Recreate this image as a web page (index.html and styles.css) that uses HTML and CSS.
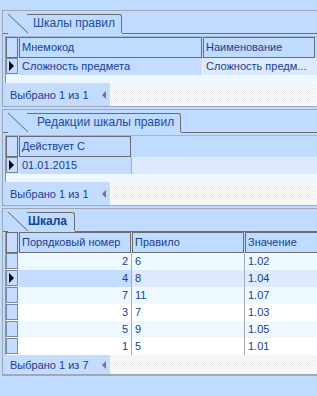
FILE: index.html
```html
<!DOCTYPE html>
<html>
<head>
    <meta charset="utf-8" />
    <title>Шкалы правил</title>
    <link rel="stylesheet" href="styles.css">
</head>
<body>
    <div class="page">
        <div class="group g1">
            <div class="tabs"><div class="tab t1">Шкалы правил</div></div>
            <div class="pane">
                <div class="grid">
                    <div class="row head">
                        <div class="ind"></div>
                        <div class="hc w183">Мнемокод</div>
                        <div class="hc w112">Наименование</div>
                    </div>
                    <div class="row sel">
                        <div class="ind cur"></div>
                        <div class="dc w183 focus lite">Сложность предмета</div>
                        <div class="dc w112">Сложность предм...</div>
                    </div>
                    <div class="empty"></div>
                </div>
                <div class="status">
                    <div class="info">Выбрано 1 из 1<span class="prev"></span></div>
                    <div class="dots"></div>
                </div>
            </div>
        </div>

        <div class="group g2">
            <div class="tabs"><div class="tab t2">Редакции шкалы правил</div></div>
            <div class="pane">
                <div class="grid">
                    <div class="row head">
                        <div class="ind"></div>
                        <div class="hc w112">Действует С</div>
                    </div>
                    <div class="row sel">
                        <div class="ind cur"></div>
                        <div class="dc w112 focus">01.01.2015</div>
                    </div>
                    <div class="empty"></div>
                </div>
                <div class="status">
                    <div class="info">Выбрано 1 из 1<span class="prev"></span></div>
                    <div class="dots"></div>
                </div>
            </div>
        </div>

        <div class="group g3">
            <div class="tabs"><div class="tab t3">Шкала</div></div>
            <div class="pane">
                <div class="grid">
                    <div class="row head">
                        <div class="ind"></div>
                        <div class="hc w112">Порядковый номер</div>
                        <div class="hc w112">Правило</div>
                        <div class="hc rest">Значение</div>
                    </div>
                    <div class="row odd">
                        <div class="ind"></div>
                        <div class="dc w112 num">2</div>
                        <div class="dc w112">6</div>
                        <div class="dc rest">1.02</div>
                    </div>
                    <div class="row sel">
                        <div class="ind cur"></div>
                        <div class="dc w112 num focus">4</div>
                        <div class="dc w112">8</div>
                        <div class="dc rest">1.04</div>
                    </div>
                    <div class="row odd">
                        <div class="ind"></div>
                        <div class="dc w112 num">7</div>
                        <div class="dc w112">11</div>
                        <div class="dc rest">1.07</div>
                    </div>
                    <div class="row">
                        <div class="ind"></div>
                        <div class="dc w112 num">3</div>
                        <div class="dc w112">7</div>
                        <div class="dc rest">1.03</div>
                    </div>
                    <div class="row odd">
                        <div class="ind"></div>
                        <div class="dc w112 num">5</div>
                        <div class="dc w112">9</div>
                        <div class="dc rest">1.05</div>
                    </div>
                    <div class="row">
                        <div class="ind"></div>
                        <div class="dc w112 num">1</div>
                        <div class="dc w112">5</div>
                        <div class="dc rest">1.01</div>
                    </div>
                </div>
                <div class="status short">
                    <div class="info">Выбрано 1 из 7<span class="prev"></span></div>
                    <div class="dots"></div>
                </div>
            </div>
        </div>
    </div>
</body>
</html>
```

FILE: styles.css
```css
body{
    margin: 0;
    width: 317px;
    height: 396px;
    overflow: hidden;
    background: #bfdbff;
    font-family: "Liberation Sans", Arial, sans-serif;
    font-size: 11px;
    color: #1b3d8f;
}
.page{
    display: flex;
    flex-direction: column;
    gap: 2px;
    padding: 10px 0 0 2px;
}
.group{
    border-top: 1px solid #a3a8b0;
    border-left: 1px solid #a3a8b0;
    border-bottom: 1px solid #a3a8b0;
}
.g3{
    border-bottom-width: 2px;
}

/* tabs */
.tabs{
    display: flex;
    align-items: flex-end;
    height: 22px;
    padding-left: 5px;
    border-bottom: 1px solid #6d6d6d;
}
.tab{
    position: relative;
    box-sizing: border-box;
    height: 20px;
    margin-bottom: -1px;
    line-height: 19px;
    font-size: 12px;
    color: #1e4b9c;
    background: #bfdbff;
    white-space: nowrap;
}
.tab::before{
    content: '';
    position: absolute;
    left: 0;
    top: 0;
    bottom: 1px;
    width: 20px;
    background: linear-gradient(to top right, transparent calc(50% - 0.8px), #6d6d6d 50%, transparent calc(50% + 0.8px));
}
.tab::after{
    content: '';
    position: absolute;
    left: 19px;
    top: 0;
    right: 0;
    bottom: 1px;
    border-top: 1px solid #6d6d6d;
    border-right: 1px solid #6d6d6d;
    border-top-right-radius: 3px;
}
.t1{
    width: 114px;
    padding-left: 25px;
}
.t2{
    width: 173px;
    padding-left: 29px;
}
.t3{
    width: 67px;
    padding-left: 20px;
    font-weight: bold;
    color: #15428b;
}

/* grid */
.pane{
    padding: 2px 0 0 2px;
}
.g3 .pane{
    padding-top: 0;
}
.grid{
    border-left: 1px solid #8d96a6;
    border-top: 1px solid #a9b6c9;
    background: #eef8ff;
}
.g3 .grid{
    border-top: 0;
}
.row{
    display: flex;
    height: 17px;
    line-height: 16px;
    background: #eef8ff;
}
.row.head{
    height: 21px;
    line-height: 19px;
    background: #bfdbff;
}
.row:not(.odd):not(.head):not(.sel){
    background: #ffffff;
}
.row.sel{
    background: #dde9fd;
}
.ind{
    box-sizing: border-box;
    flex: none;
    width: 12px;
    height: 16px;
    margin-right: 1px;
    border: 1px solid #7e8797;
    background: #c3dcff;
    position: relative;
}
.head .ind{
    height: 21px;
    border-color: #6d6d6d;
}
.ind.cur::after{
    content: '';
    position: absolute;
    left: 2px;
    top: 2px;
    border-left: 5px solid #000;
    border-top: 5px solid transparent;
    border-bottom: 5px solid transparent;
}
.hc{
    box-sizing: border-box;
    flex: none;
    height: 21px;
    margin-right: 1px;
    padding-left: 2px;
    border: 1px solid #6d6d6d;
    white-space: nowrap;
    overflow: hidden;
}
.hc.w183{
    width: 183px;
}
.hc.w112{
    width: 112px;
}
.hc.rest{
    flex: 1;
    margin-right: 0;
    border-right: 0;
}
.dc{
    box-sizing: border-box;
    flex: none;
    padding-left: 3px;
    border-right: 1px solid #a8acb3;
    white-space: nowrap;
    overflow: hidden;
}
.dc.w183{
    width: 184px;
}
.dc.w112{
    width: 113px;
}
.dc.rest{
    flex: 1;
    border-right: 0;
}
.dc.lite{
    border-right-color: #eef8ff;
}
.g1 .dc.w112{
    width: 112px;
    border-right: 0;
}
.dc.num{
    text-align: right;
    padding: 0 3px 0 0;
}
.dc.focus{
    background: #c3dcff;
}
.empty{
    height: 8px;
}

/* status bar */
.status{
    display: flex;
    height: 23px;
    margin-left: 0;
}
.status.short{
    height: 19px;
}
.info{
    display: flex;
    align-items: center;
    width: 100px;
    padding-left: 5px;
    background: #c3dcff;
    white-space: nowrap;
}
.prev{
    margin-left: 13px;
    border-right: 4px solid #6f7480;
    border-top: 4px solid transparent;
    border-bottom: 4px solid transparent;
}
.dots{
    flex: 1;
    background-color: #ffffff;
    background-image: repeating-conic-gradient(#ececec 0 25%, #ffffff 0 50%);
    background-size: 2px 2px;
}
```
